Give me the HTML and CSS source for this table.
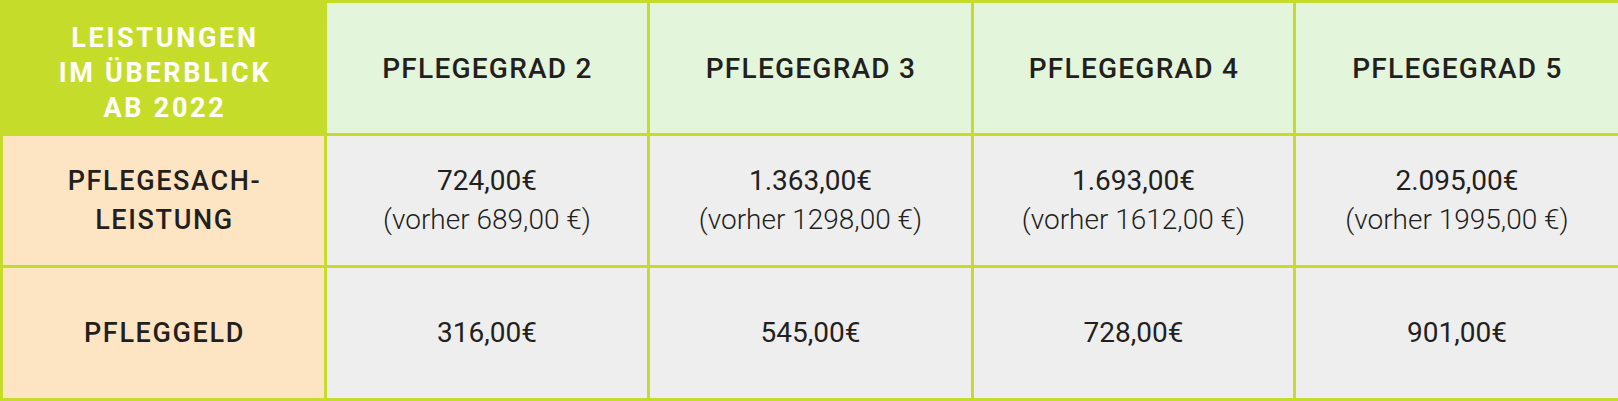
FILE: index.html
```html
<!DOCTYPE html>
<html lang="de">
<head>
<meta charset="utf-8">
<title>Leistungen im Überblick ab 2022</title>
<link rel="stylesheet" href="styles.css">
</head>
<body>
<div class="table">
  <div class="cell corner">LEISTUNGEN<br>IM ÜBERBLICK<br>AB 2022</div>
  <div class="cell head">PFLEGEGRAD 2</div>
  <div class="cell head">PFLEGEGRAD 3</div>
  <div class="cell head">PFLEGEGRAD 4</div>
  <div class="cell head">PFLEGEGRAD 5</div>

  <div class="cell label">PFLEGESACH-<br>LEISTUNG</div>
  <div class="cell value"><span class="amount">724,00€</span><span class="before">(vorher 689,00 €)</span></div>
  <div class="cell value"><span class="amount">1.363,00€</span><span class="before">(vorher 1298,00 €)</span></div>
  <div class="cell value"><span class="amount">1.693,00€</span><span class="before">(vorher 1612,00 €)</span></div>
  <div class="cell value"><span class="amount">2.095,00€</span><span class="before">(vorher 1995,00 €)</span></div>

  <div class="cell label">PFLEGGELD</div>
  <div class="cell value"><span class="amount">316,00€</span></div>
  <div class="cell value"><span class="amount">545,00€</span></div>
  <div class="cell value"><span class="amount">728,00€</span></div>
  <div class="cell value"><span class="amount">901,00€</span></div>
</div>
</body>
</html>
```
FILE: styles.css
```css
html, body {
  margin: 0;
  padding: 0;
  background: #ffffff;
}

body {
  font-family: Roboto, "Liberation Sans", sans-serif;
  color: #231f20;
  overflow: hidden;
}

.table {
  display: grid;
  grid-template-columns: 321px 320px 321px 319px 1fr;
  grid-template-rows: 130px 129px 130px;
  gap: 3px;
  padding: 3px 0 3px 3px;
  background: #c5dd2a;
  width: 1618px;
  box-sizing: border-box;
}

.cell {
  display: flex;
  flex-direction: column;
  align-items: center;
  justify-content: center;
  text-align: center;
}

.corner {
  background: #c5dd2a;
  color: #ffffff;
  font-weight: 700;
  font-size: 27px;
  line-height: 35px;
  letter-spacing: 2.7px;
  padding: 11px 0 0 3px;
  box-sizing: border-box;
}

.head {
  background: #e3f5db;
  font-weight: 500;
  font-size: 28px;
  letter-spacing: 1.25px;
  padding-left: 1px;
}

.label {
  background: #fde5c3;
  font-weight: 500;
  font-size: 27px;
  line-height: 38.5px;
  letter-spacing: 1.65px;
  padding-left: 2px;
}

.value {
  background: #eeeeee;
  font-size: 28px;
  line-height: 38.5px;
}

.amount {
  font-weight: 400;
}

.before {
  font-weight: 300;
}
```
